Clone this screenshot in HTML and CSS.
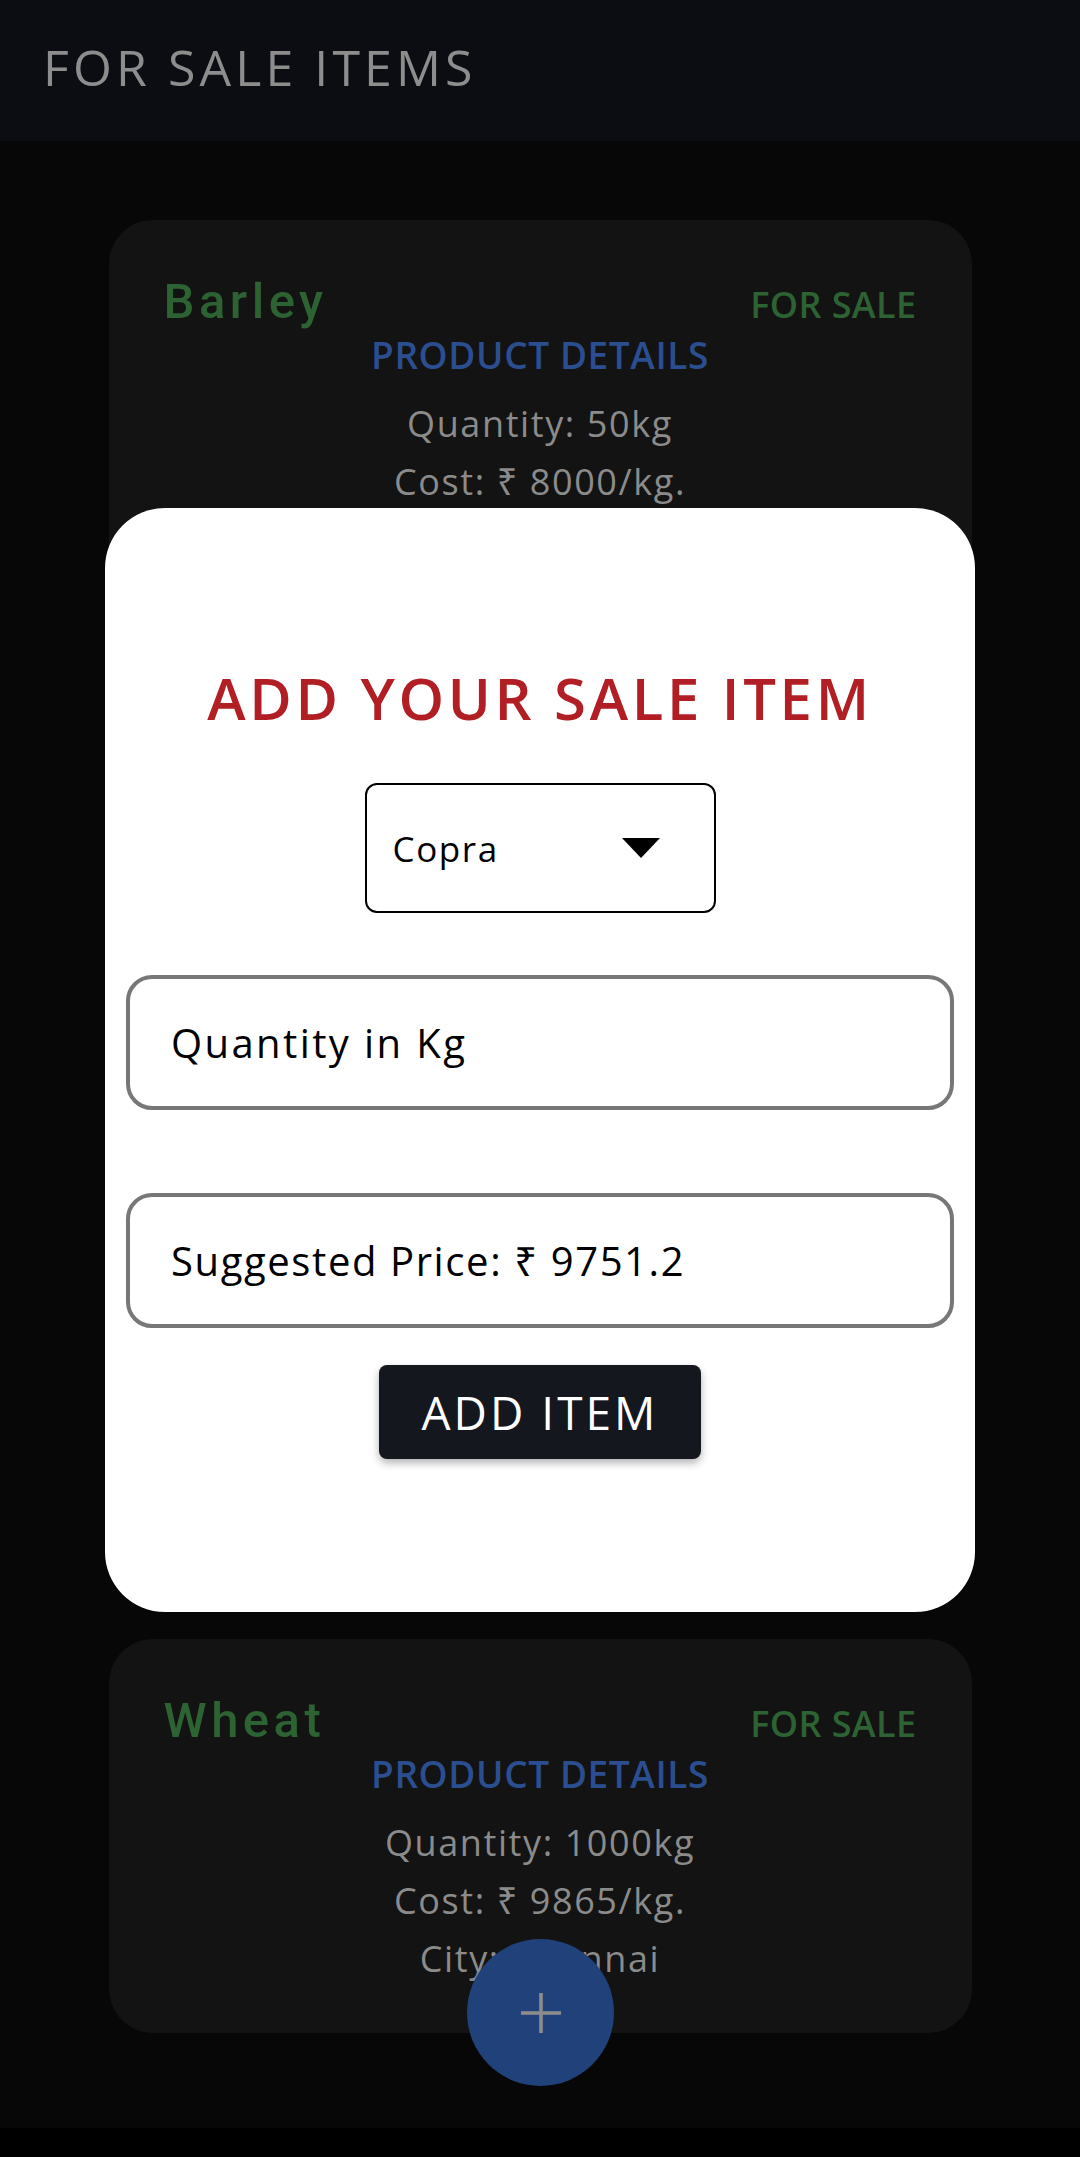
FILE: index.html
```html
<!DOCTYPE html>
<html lang="en">
<head>
<meta charset="utf-8">
<title>For Sale Items</title>
<link rel="stylesheet" href="styles.css">
</head>
<body>
<div class="screen">
  <header class="appbar">
    <h1 class="appbar-title">FOR SALE ITEMS</h1>
  </header>

  <main class="list">
    <article class="card">
      <div class="card-head">
        <span class="crop">Barley</span>
        <span class="status">FOR SALE</span>
      </div>
      <div class="details">
        <div class="details-title">PRODUCT DETAILS</div>
        <div class="details-line">Quantity: 50kg</div>
        <div class="details-line">Cost: ₹ 8000/kg.</div>
        <div class="details-line">City: Chennai</div>
      </div>
    </article>

    <article class="card" aria-hidden="true"></article>
    <article class="card" aria-hidden="true"></article>

    <article class="card">
      <div class="card-head">
        <span class="crop">Wheat</span>
        <span class="status">FOR SALE</span>
      </div>
      <div class="details">
        <div class="details-title">PRODUCT DETAILS</div>
        <div class="details-line">Quantity: 1000kg</div>
        <div class="details-line">Cost: ₹ 9865/kg.</div>
        <div class="details-line">City: Chennai</div>
      </div>
    </article>
  </main>

  <button class="fab" aria-label="Add">
    <svg class="fab-icon" viewBox="0 0 40 40" width="40" height="40">
      <rect x="18.2" y="0" width="3.6" height="40" fill="#8c8c8c"/>
      <rect x="0" y="18.2" width="40" height="3.6" fill="#8c8c8c"/>
    </svg>
  </button>

  <div class="modal">
    <h2 class="modal-title">ADD YOUR SALE ITEM</h2>
    <div class="picker">
      <span class="picker-value">Copra</span>
      <svg class="picker-arrow" viewBox="0 0 38 20" width="38" height="20">
        <polygon points="0,0 38,0 19,20" fill="#000"/>
      </svg>
    </div>
    <input class="field field-qty" type="text" placeholder="Quantity in Kg">
    <input class="field field-price" type="text" value="Suggested Price: ₹ 9751.2" readonly>
    <button class="add-btn">ADD ITEM</button>
  </div>

  <div class="navbar"></div>
</div>
</body>
</html>
```

FILE: styles.css
```css
html, body {
  margin: 0;
  padding: 0;
  background: #070707;
}

.screen {
  position: relative;
  width: 1080px;
  height: 2157px;
  overflow: hidden;
  background: #070707;
  font-family: "Open Sans", "Noto Sans", "DejaVu Sans", sans-serif;
}

.appbar {
  height: 141px;
  box-sizing: border-box;
  padding: 32px 0 0 43px;
  background: #0b0d12;
}

.appbar-title {
  margin: 0;
  font-size: 50px;
  line-height: 70px;
  font-weight: 400;
  letter-spacing: 4.1px;
  color: #8d8d8d;
}

.list {
  display: flex;
  flex-direction: column;
  align-items: center;
  gap: 79px;
  padding-top: 79px;
}

.card {
  width: 863px;
  height: 394px;
  box-sizing: border-box;
  padding: 54px 55px 0;
  border-radius: 44px;
  background: #131313;
}

.card-head {
  display: flex;
  justify-content: space-between;
  align-items: baseline;
  height: 56px;
}

.crop {
  font-family: Roboto, "Noto Sans", sans-serif;
  font-weight: 500;
  font-size: 49px;
  line-height: 56px;
  letter-spacing: 4.5px;
  color: #2d6232;
}

.status {
  font-weight: 600;
  font-size: 36px;
  line-height: 56px;
  letter-spacing: 0.4px;
  color: #2d6232;
}

.details {
  display: flex;
  flex-direction: column;
  align-items: center;
}

.details-title {
  margin-top: 5px;
  font-weight: 600;
  font-size: 37px;
  line-height: 40px;
  letter-spacing: 0.6px;
  color: #2b4e90;
}

.details-title + .details-line {
  margin-top: 20px;
}

.details-line {
  font-size: 36px;
  line-height: 58px;
  letter-spacing: 1.6px;
  color: #8b8b8b;
}

.fab {
  position: absolute;
  left: 467px;
  top: 1939px;
  width: 147px;
  height: 147px;
  padding: 0;
  border: none;
  border-radius: 50%;
  background: #21417a;
  display: flex;
  align-items: center;
  justify-content: center;
}

.modal {
  position: absolute;
  left: 105px;
  top: 508px;
  width: 870px;
  height: 1104px;
  box-sizing: border-box;
  padding: 155px 21px 0;
  border-radius: 60px;
  background: #ffffff;
  display: flex;
  flex-direction: column;
  align-items: center;
}

.modal-title {
  margin: 0;
  font-weight: 600;
  font-size: 58px;
  line-height: 70px;
  letter-spacing: 3.7px;
  color: #b11e23;
}

.picker {
  margin-top: 50px;
  width: 351px;
  height: 130px;
  box-sizing: border-box;
  border: 2.5px solid #000;
  border-radius: 12px;
  display: flex;
  align-items: center;
  justify-content: space-between;
  padding: 0 54px 0 26px;
}

.picker-value {
  font-size: 35px;
  letter-spacing: 1.6px;
  color: #000;
}

.field {
  display: block;
  width: 100%;
  height: 135px;
  box-sizing: border-box;
  border: 4px solid #777777;
  border-radius: 26px;
  padding: 0 0 0 41px;
  background: #fff;
  font-family: "Open Sans", "Noto Sans", "DejaVu Sans", sans-serif;
  font-size: 40px;
  letter-spacing: 2.4px;
  color: #000;
  outline: none;
}

.field::placeholder {
  color: #000;
  opacity: 1;
}

.field-qty {
  margin-top: 62px;
}

.field-price {
  margin-top: 83px;
  letter-spacing: 1.6px;
}

.add-btn {
  margin-top: 37px;
  width: 322px;
  height: 94px;
  border: none;
  border-radius: 8px;
  background: #14171e;
  box-shadow: 0 4px 8px rgba(0, 0, 0, 0.3);
  font-family: "Open Sans", "Noto Sans", "DejaVu Sans", sans-serif;
  font-size: 46px;
  letter-spacing: 3px;
  color: #fff;
}

.navbar {
  position: absolute;
  left: 0;
  bottom: 0;
  width: 1080px;
  height: 29px;
  background: #000;
}
```
